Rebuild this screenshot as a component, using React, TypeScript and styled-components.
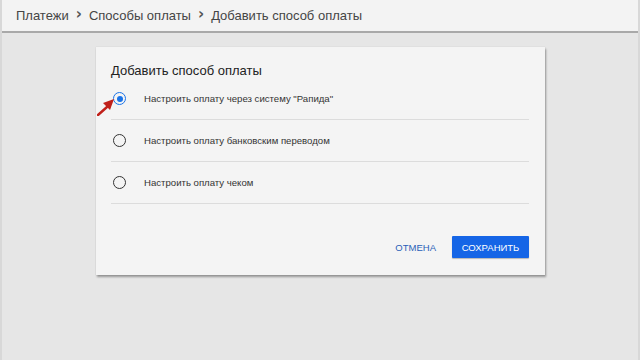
import React from "react";
import styled, { createGlobalStyle } from "styled-components";

const GlobalStyle = createGlobalStyle`
html, body {
margin: 0;
padding: 0;
background: #e6e6e6;
font-family: "Liberation Sans", Arial, sans-serif;
}
`;

const options = [
    "Настроить оплату через систему \"Рапида\"",
    "Настроить оплату банковским переводом",
    "Настроить оплату чеком",
];

const App = () => {
    const selected = 0;

    return (
        <Page>
            <GlobalStyle />
            <Header>
                <Crumb>Платежи</Crumb>
                <Chevron>›</Chevron>
                <Crumb>Способы оплаты</Crumb>
                <Chevron>›</Chevron>
                <Crumb>Добавить способ оплаты</Crumb>
            </Header>

            <Body>
                <Card>
                    <Title>Добавить способ оплаты</Title>
                    <OptionList>
                        {options.map((label, i) => (
                            <OptionRow key={label}>
                                <Radio $checked={i === selected}>
                                    {i === selected && <Arrow viewBox="0 0 20 18">
                                        <path d="M1 17 L10 9" stroke="#c0201a" strokeWidth="2.4" strokeLinecap="round" />
                                        <path d="M6 5 L17 1 L13 12 Z" fill="#c0201a" />
                                    </Arrow>}
                                </Radio>
                                <OptionLabel>{label}</OptionLabel>
                            </OptionRow>
                        ))}
                    </OptionList>
                    <Actions>
                        <TextButton>Отмена</TextButton>
                        <PrimaryButton>Сохранить</PrimaryButton>
                    </Actions>
                </Card>
            </Body>
        </Page>
    );
};

export default App;

const Page = styled.div`
width: 640px;
height: 360px;
display: flex;
flex-direction: column;
box-sizing: border-box;
border-left: 2px solid #d8d8d8;
border-right: 2px solid #d8d8d8;
background: #e6e6e6;
overflow: hidden;
`;

const Header = styled.div`
height: 30px;
display: flex;
align-items: center;
gap: 6px;
padding: 0 0 1px 14px;
background: #f3f3f3;
border-bottom: 2px solid #a9a9a9;
`;

const Crumb = styled.span`
color: #454545;
font-family: "Liberation Sans", Arial, sans-serif;
font-size: 13px;
`;

const Chevron = styled.span`
color: #555;
font-family: "DejaVu Sans", sans-serif;
font-size: 15px;
font-weight: 700;
line-height: 1;
margin: -2px 1px 0;
`;

const Body = styled.div`
flex: 1;
padding: 14px 0 0 94px;
`;

const Card = styled.div`
width: 449px;
height: 228px;
box-sizing: border-box;
padding: 15px 16px 0 15px;
background: #f4f4f4;
box-shadow: 1px 2px 2px rgba(0, 0, 0, 0.35), 0 0 1px rgba(0, 0, 0, 0.15);
display: flex;
flex-direction: column;
`;

const Title = styled.div`
color: #222;
font-size: 13px;
line-height: 18px;
`;

const OptionList = styled.div`
display: flex;
flex-direction: column;
margin-top: -2px;
`;

const OptionRow = styled.div`
display: flex;
align-items: center;
height: 42px;
box-sizing: border-box;
border-bottom: 1px solid #dcdcdc;
`;

const Radio = styled.span<{ $checked: boolean }>`
position: relative;
width: 11px;
height: 11px;
margin-left: 2px;
border-radius: 50%;
border: 1.6px solid ${p => (p.$checked ? "#1a73e8" : "#333")};
box-sizing: content-box;
flex-shrink: 0;

&::after {
content: "";
display: ${p => (p.$checked ? "block" : "none")};
position: absolute;
left: 2.5px;
top: 2.5px;
width: 6px;
height: 6px;
border-radius: 50%;
background: #1a73e8;
}
`;

const Arrow = styled.svg`
position: absolute;
left: -17px;
top: 5px;
width: 20px;
height: 18px;
`;

const OptionLabel = styled.span`
margin-left: 18px;
color: #333;
font-size: 9.6px;
`;

const Actions = styled.div`
display: flex;
justify-content: flex-end;
align-items: center;
gap: 16px;
margin-top: 32px;
`;

const TextButton = styled.button`
border: none;
background: transparent;
padding: 0;
color: #2a5fb8;
font-family: "Liberation Sans", Arial, sans-serif;
font-size: 9.5px;
text-transform: uppercase;
`;

const PrimaryButton = styled.button`
width: 77px;
height: 22px;
border: none;
border-radius: 1px;
background: #1565e6;
color: #fff;
font-family: "Liberation Sans", Arial, sans-serif;
font-size: 9.5px;
text-transform: uppercase;
box-shadow: 0 1px 1px rgba(0, 0, 0, 0.25);
`;
